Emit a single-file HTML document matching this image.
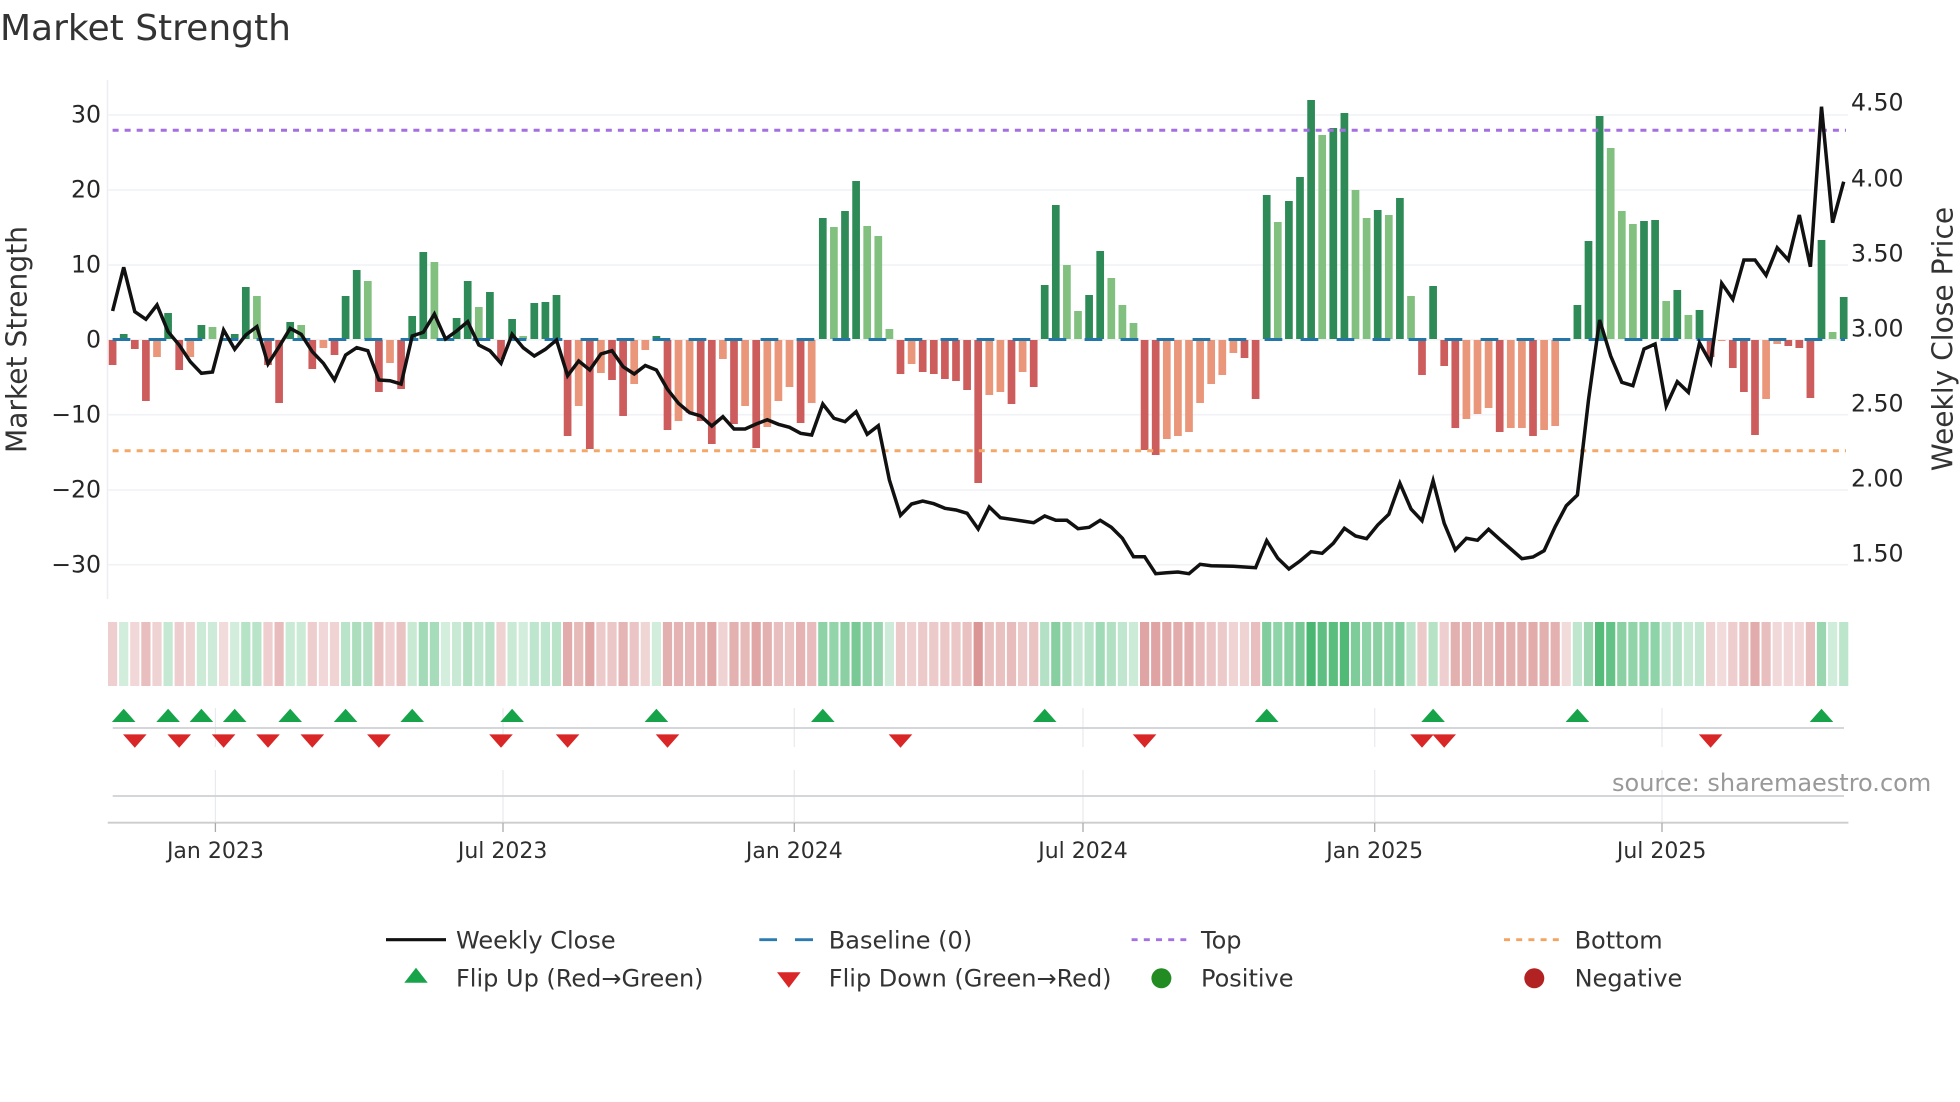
<!DOCTYPE html>
<html><head><meta charset="utf-8"><title>Market Strength</title>
<style>
html,body{margin:0;padding:0;background:#fff;width:1960px;height:1102px;overflow:hidden}
svg{display:block}
text{font-family:"DejaVu Sans","Liberation Sans",sans-serif}
.g{stroke:#29aa58}.r{stroke:#c04a4a}
</style></head><body>
<svg width="1960" height="1102" viewBox="0 0 1960 1102" xmlns="http://www.w3.org/2000/svg">
<rect width="1960" height="1102" fill="#fff"/>
<text x="0" y="40" font-size="36" fill="#333">Market Strength</text>

<!-- grid -->
<path d="M107.5 80V599" stroke="#eceef2" stroke-width="1.5" fill="none"/>
<path d="M108 115H1848M108 190H1848M108 265H1848M108 339.7H1848M108 414.7H1848M108 490H1848M108 564.7H1848" stroke="#f0f2f6" stroke-width="1.6" fill="none"/>

<!-- bars -->
<g fill="none" stroke-width="7.7">
<path stroke="#2e8b57" d="M123.7 339V334M168.1 339V313M201.4 339V325M234.7 339V334M245.8 339V287M290.2 339V322M345.6 339V296M356.7 339V270M412.2 339V316M423.3 339V252M456.6 339V318M467.7 339V281M489.9 339V292M512.1 339V319M534.3 339V303M545.4 339V302M556.5 339V295M656.4 339V336M822.8 339V218M845 339V211M856.1 339V181M1044.7 339V285M1055.8 339V205M1089.1 339V295M1100.2 339V251M1266.7 339V195M1288.9 339V201M1300 339V177M1311.1 339V100M1333.3 339V128M1344.4 339V113M1377.7 339V210M1399.9 339V198M1433.1 339V286M1577.4 339V305M1588.5 339V241M1599.6 339V116M1644 339V221M1655.1 339V220M1677.3 339V290M1699.5 339V310M1821.5 339V240M1843.7 339V297"/>
<path stroke="#81c07f" d="M212.5 339V327M256.9 339V296M301.2 339V325M367.8 339V281M434.4 339V262M445.5 339V338M478.8 339V307M523.2 339V336M833.9 339V227M867.2 339V226M878.3 339V236M889.4 339V329M1066.9 339V265M1078 339V311M1111.3 339V278M1122.4 339V305M1133.5 339V323M1277.8 339V222M1322.2 339V135M1355.5 339V190M1366.6 339V218M1388.8 339V215M1411 339V296M1610.7 339V148M1621.8 339V211M1632.9 339V224M1666.2 339V301M1688.4 339V315M1832.6 339V332"/>
<path stroke="#cd5c5c" d="M112.6 340V365M134.8 340V349M145.9 340V401M179.2 340V370M223.6 340V341M268 340V365M279.1 340V403M312.3 340V369M334.5 340V355M378.9 340V392M401.1 340V389M501 340V359M567.6 340V436M589.8 340V449M612 340V380M623.1 340V416M667.5 340V430M700.7 340V421M711.8 340V444M734 340V424M756.2 340V448M800.6 340V423M900.5 340V374M922.7 340V372M933.8 340V374M944.9 340V379M956 340V381M967.1 340V390M978.2 340V483M1011.5 340V404M1033.7 340V387M1144.6 340V450M1155.7 340V455M1244.5 340V358M1255.6 340V399M1422 340V375M1444.2 340V366M1455.3 340V428M1499.7 340V432M1533 340V436M1710.6 340V357M1732.8 340V368M1743.9 340V392M1755 340V435M1788.3 340V346M1799.3 340V348M1810.4 340V398"/>
<path stroke="#e9967a" d="M157 340V357M190.3 340V357M323.4 340V348M390 340V363M578.7 340V406M600.9 340V373M634.2 340V384M645.3 340V350M678.5 340V421M689.6 340V413M722.9 340V359M745.1 340V406M767.3 340V427M778.4 340V401M789.5 340V387M811.7 340V403M911.6 340V364M989.3 340V395M1000.4 340V392M1022.6 340V372M1166.8 340V439M1177.9 340V436M1189 340V432M1200.1 340V403M1211.2 340V384M1222.3 340V375M1233.4 340V353M1466.4 340V419M1477.5 340V414M1488.6 340V408M1510.8 340V428M1521.9 340V428M1544.1 340V430M1555.2 340V426M1566.3 340V341M1721.7 340V341M1766.1 340V399M1777.2 340V344"/>
</g>

<!-- baseline and thresholds -->
<path d="M112.6 339.5H1845" stroke="#2276a8" stroke-width="3" stroke-dasharray="17.7 18.3" fill="none"/>
<path d="M112.6 130.3H1846" stroke="#a46fe0" stroke-width="3" stroke-dasharray="6 6.03" fill="none"/>
<path d="M112.6 450.7H1846" stroke="#f4a868" stroke-width="3" stroke-dasharray="6 6.03" fill="none"/>

<!-- price -->
<polyline fill="none" stroke="#111" stroke-width="3.5" stroke-linejoin="miter" points="112.6,311 123.7,267.3 134.8,311.7 145.9,319.3 157,305 168.1,331.7 179.2,345 190.3,361.7 201.4,373.3 212.5,372 223.6,330 234.7,349.3 245.8,335 256.9,326.7 268,364 279.1,346.7 290.2,328.3 301.2,334.3 312.3,351.7 323.4,363.3 334.5,380 345.6,355 356.7,347.7 367.8,350.7 378.9,380 390,380.7 401.1,384 412.2,336 423.3,332.3 434.4,314 445.5,339 456.6,331 467.7,321.7 478.8,345 489.9,350.7 501,363.3 512.1,334.3 523.2,347.7 534.3,356 545.4,349.3 556.5,340 567.6,375.7 578.7,361 589.8,370 600.9,354 612,350.7 623.1,366.7 634.2,374 645.3,365.5 656.4,370 667.5,389.3 678.5,403.3 689.6,412.7 700.7,416 711.8,426 722.9,416.7 734,429 745.1,429 756.2,424 767.3,419.7 778.4,424.3 789.5,427.3 800.6,433.3 811.7,435 822.8,404 833.9,418.3 845,421.7 856.1,411.7 867.2,434.3 878.3,425.7 889.4,480 900.5,515.3 911.6,504 922.7,501 933.8,503.7 944.9,508.3 956,510 967.1,513.3 978.2,529 989.3,507 1000.4,517.7 1011.5,519.3 1022.6,521 1033.7,522.7 1044.7,516 1055.8,520.3 1066.9,520.3 1078,528.7 1089.1,527.3 1100.2,520.3 1111.3,527.3 1122.4,538.3 1133.5,556.7 1144.6,556.7 1155.7,573.7 1166.8,572.7 1177.9,572 1189,573.7 1200.1,564.3 1211.2,565.7 1222.3,566 1233.4,566.3 1244.5,567 1255.6,567.7 1266.7,540.7 1277.8,558.3 1288.9,569 1300,561 1311.1,551.7 1322.2,553.3 1333.3,543.3 1344.4,528.3 1355.5,536 1366.6,538.7 1377.7,525 1388.8,514.3 1399.9,483.3 1411,509 1422,520.7 1433.1,480.7 1444.2,523.3 1455.3,550 1466.4,538.3 1477.5,540.3 1488.6,529.3 1499.7,539.3 1510.8,549 1521.9,558.7 1533,557 1544.1,550.7 1555.2,526.7 1566.3,505.7 1577.4,495 1588.5,400 1599.6,320 1610.7,356 1621.8,382.3 1632.9,385.7 1644,349 1655.1,344 1666.2,406 1677.3,381.7 1688.4,392.3 1699.5,343 1710.6,362.7 1721.7,283.3 1732.8,299.3 1743.9,260 1755,260 1766.1,275.3 1777.2,247.7 1788.3,260 1799.3,215 1810.4,266.7 1821.5,106.7 1832.6,222.7 1843.7,181.7"/>

<!-- left axis labels -->
<g font-size="23.6" fill="#262626" text-anchor="end">
<text x="101" y="122.7">30</text>
<text x="101" y="197.7">20</text>
<text x="101" y="272.5">10</text>
<text x="101" y="347.3">0</text>
<text x="101" y="422.7">−10</text>
<text x="101" y="497.7">−20</text>
<text x="101" y="572.7">−30</text>
</g>
<g font-size="23.6" fill="#262626">
<text x="1851" y="110.7">4.50</text>
<text x="1851" y="186.7">4.00</text>
<text x="1851" y="261.7">3.50</text>
<text x="1851" y="336.7">3.00</text>
<text x="1851" y="411.7">2.50</text>
<text x="1851" y="486.7">2.00</text>
<text x="1851" y="561.7">1.50</text>
</g>
<text transform="translate(26.4 339.5) rotate(-90)" text-anchor="middle" font-size="28.1" fill="#333">Market Strength</text>
<text transform="translate(1952.5 339) rotate(-90)" text-anchor="middle" font-size="28.1" fill="#333">Weekly Close Price</text>

<!-- heat strip -->
<g fill="none" stroke-width="9.2">
<path class="r" opacity=".27" d="M112.6 622v64"/><path class="g" opacity=".21" d="M123.7 622v64"/><path class="r" opacity=".22" d="M134.8 622v64"/><path class="r" opacity=".36" d="M145.9 622v64"/><path class="r" opacity=".25" d="M157 622v64"/><path class="g" opacity=".27" d="M168.1 622v64"/><path class="r" opacity=".28" d="M179.2 622v64"/><path class="r" opacity=".25" d="M190.3 622v64"/><path class="g" opacity=".24" d="M201.4 622v64"/><path class="g" opacity=".23" d="M212.5 622v64"/>
<path class="r" opacity=".2" d="M223.6 622v64"/><path class="g" opacity=".21" d="M234.7 622v64"/><path class="g" opacity=".34" d="M245.8 622v64"/><path class="g" opacity=".32" d="M256.9 622v64"/><path class="r" opacity=".27" d="M268 622v64"/><path class="r" opacity=".37" d="M279.1 622v64"/><path class="g" opacity=".25" d="M290.2 622v64"/><path class="g" opacity=".24" d="M301.2 622v64"/><path class="r" opacity=".28" d="M312.3 622v64"/><path class="r" opacity=".22" d="M323.4 622v64"/>
<path class="r" opacity=".24" d="M334.5 622v64"/><path class="g" opacity=".32" d="M345.6 622v64"/><path class="g" opacity=".39" d="M356.7 622v64"/><path class="g" opacity=".36" d="M367.8 622v64"/><path class="r" opacity=".34" d="M378.9 622v64"/><path class="r" opacity=".26" d="M390 622v64"/><path class="r" opacity=".33" d="M401.1 622v64"/><path class="g" opacity=".26" d="M412.2 622v64"/><path class="g" opacity=".43" d="M423.3 622v64"/><path class="g" opacity=".41" d="M434.4 622v64"/>
<path class="g" opacity=".2" d="M445.5 622v64"/><path class="g" opacity=".26" d="M456.6 622v64"/><path class="g" opacity=".36" d="M467.7 622v64"/><path class="g" opacity=".29" d="M478.8 622v64"/><path class="g" opacity=".33" d="M489.9 622v64"/><path class="r" opacity=".25" d="M501 622v64"/><path class="g" opacity=".25" d="M512.1 622v64"/><path class="g" opacity=".21" d="M523.2 622v64"/><path class="g" opacity=".3" d="M534.3 622v64"/><path class="g" opacity=".3" d="M545.4 622v64"/>
<path class="g" opacity=".32" d="M556.5 622v64"/><path class="r" opacity=".46" d="M567.6 622v64"/><path class="r" opacity=".38" d="M578.7 622v64"/><path class="r" opacity=".49" d="M589.8 622v64"/><path class="r" opacity=".29" d="M600.9 622v64"/><path class="r" opacity=".31" d="M612 622v64"/><path class="r" opacity=".41" d="M623.1 622v64"/><path class="r" opacity=".32" d="M634.2 622v64"/><path class="r" opacity=".23" d="M645.3 622v64"/><path class="g" opacity=".21" d="M656.4 622v64"/>
<path class="r" opacity=".44" d="M667.5 622v64"/><path class="r" opacity=".42" d="M678.5 622v64"/><path class="r" opacity=".4" d="M689.6 622v64"/><path class="r" opacity=".42" d="M700.7 622v64"/><path class="r" opacity=".48" d="M711.8 622v64"/><path class="r" opacity=".25" d="M722.9 622v64"/><path class="r" opacity=".43" d="M734 622v64"/><path class="r" opacity=".38" d="M745.1 622v64"/><path class="r" opacity=".49" d="M756.2 622v64"/><path class="r" opacity=".43" d="M767.3 622v64"/>
<path class="r" opacity=".36" d="M778.4 622v64"/><path class="r" opacity=".33" d="M789.5 622v64"/><path class="r" opacity=".42" d="M800.6 622v64"/><path class="r" opacity=".37" d="M811.7 622v64"/><path class="g" opacity=".53" d="M822.8 622v64"/><path class="g" opacity=".5" d="M833.9 622v64"/><path class="g" opacity=".55" d="M845 622v64"/><path class="g" opacity=".63" d="M856.1 622v64"/><path class="g" opacity=".51" d="M867.2 622v64"/><path class="g" opacity=".48" d="M878.3 622v64"/>
<path class="g" opacity=".23" d="M889.4 622v64"/><path class="r" opacity=".29" d="M900.5 622v64"/><path class="r" opacity=".26" d="M911.6 622v64"/><path class="r" opacity=".29" d="M922.7 622v64"/><path class="r" opacity=".29" d="M933.8 622v64"/><path class="r" opacity=".31" d="M944.9 622v64"/><path class="r" opacity=".31" d="M956 622v64"/><path class="r" opacity=".34" d="M967.1 622v64"/><path class="r" opacity=".59" d="M978.2 622v64"/><path class="r" opacity=".35" d="M989.3 622v64"/>
<path class="r" opacity=".34" d="M1000.4 622v64"/><path class="r" opacity=".37" d="M1011.5 622v64"/><path class="r" opacity=".29" d="M1022.6 622v64"/><path class="r" opacity=".33" d="M1033.7 622v64"/><path class="g" opacity=".35" d="M1044.7 622v64"/><path class="g" opacity=".56" d="M1055.8 622v64"/><path class="g" opacity=".4" d="M1066.9 622v64"/><path class="g" opacity=".28" d="M1078 622v64"/><path class="g" opacity=".32" d="M1089.1 622v64"/><path class="g" opacity=".44" d="M1100.2 622v64"/>
<path class="g" opacity=".36" d="M1111.3 622v64"/><path class="g" opacity=".29" d="M1122.4 622v64"/><path class="g" opacity=".24" d="M1133.5 622v64"/><path class="r" opacity=".5" d="M1144.6 622v64"/><path class="r" opacity=".51" d="M1155.7 622v64"/><path class="r" opacity=".47" d="M1166.8 622v64"/><path class="r" opacity=".46" d="M1177.9 622v64"/><path class="r" opacity=".45" d="M1189 622v64"/><path class="r" opacity=".37" d="M1200.1 622v64"/><path class="r" opacity=".32" d="M1211.2 622v64"/>
<path class="r" opacity=".29" d="M1222.3 622v64"/><path class="r" opacity=".24" d="M1233.4 622v64"/><path class="r" opacity=".25" d="M1244.5 622v64"/><path class="r" opacity=".36" d="M1255.6 622v64"/><path class="g" opacity=".59" d="M1266.7 622v64"/><path class="g" opacity=".52" d="M1277.8 622v64"/><path class="g" opacity=".57" d="M1288.9 622v64"/><path class="g" opacity=".64" d="M1300 622v64"/><path class="g" opacity=".85" d="M1311.1 622v64"/><path class="g" opacity=".75" d="M1322.2 622v64"/>
<path class="g" opacity=".77" d="M1333.3 622v64"/><path class="g" opacity=".81" d="M1344.4 622v64"/><path class="g" opacity=".6" d="M1355.5 622v64"/><path class="g" opacity=".53" d="M1366.6 622v64"/><path class="g" opacity=".55" d="M1377.7 622v64"/><path class="g" opacity=".53" d="M1388.8 622v64"/><path class="g" opacity=".58" d="M1399.9 622v64"/><path class="g" opacity=".32" d="M1411 622v64"/><path class="r" opacity=".29" d="M1422 622v64"/><path class="g" opacity=".34" d="M1433.1 622v64"/>
<path class="r" opacity=".27" d="M1444.2 622v64"/><path class="r" opacity=".44" d="M1455.3 622v64"/><path class="r" opacity=".41" d="M1466.4 622v64"/><path class="r" opacity=".4" d="M1477.5 622v64"/><path class="r" opacity=".38" d="M1488.6 622v64"/><path class="r" opacity=".45" d="M1499.7 622v64"/><path class="r" opacity=".44" d="M1510.8 622v64"/><path class="r" opacity=".44" d="M1521.9 622v64"/><path class="r" opacity=".46" d="M1533 622v64"/><path class="r" opacity=".44" d="M1544.1 622v64"/>
<path class="r" opacity=".43" d="M1555.2 622v64"/><path class="r" opacity=".2" d="M1566.3 622v64"/><path class="g" opacity=".29" d="M1577.4 622v64"/><path class="g" opacity=".46" d="M1588.5 622v64"/><path class="g" opacity=".8" d="M1599.6 622v64"/><path class="g" opacity=".72" d="M1610.7 622v64"/><path class="g" opacity=".55" d="M1621.8 622v64"/><path class="g" opacity=".51" d="M1632.9 622v64"/><path class="g" opacity=".52" d="M1644 622v64"/><path class="g" opacity=".52" d="M1655.1 622v64"/>
<path class="g" opacity=".3" d="M1666.2 622v64"/><path class="g" opacity=".33" d="M1677.3 622v64"/><path class="g" opacity=".26" d="M1688.4 622v64"/><path class="g" opacity=".28" d="M1699.5 622v64"/><path class="r" opacity=".25" d="M1710.6 622v64"/><path class="r" opacity=".2" d="M1721.7 622v64"/><path class="r" opacity=".28" d="M1732.8 622v64"/><path class="r" opacity=".34" d="M1743.9 622v64"/><path class="r" opacity=".46" d="M1755 622v64"/><path class="r" opacity=".36" d="M1766.1 622v64"/>
<path class="r" opacity=".21" d="M1777.2 622v64"/><path class="r" opacity=".22" d="M1788.3 622v64"/><path class="r" opacity=".22" d="M1799.3 622v64"/><path class="r" opacity=".36" d="M1810.4 622v64"/><path class="g" opacity=".47" d="M1821.5 622v64"/><path class="g" opacity=".22" d="M1832.6 622v64"/><path class="g" opacity=".31" d="M1843.7 622v64"/>
</g>

<!-- lower panels: faint vertical grid -->
<path d="M215.4 708V747M503 708V747M794.3 708V747M1083 708V747M1374.7 708V747M1662 708V747M215.4 770V823M503 770V823M794.3 770V823M1083 770V823M1374.7 770V823M1662 770V823" stroke="#e8eaee" stroke-width="1.2" fill="none"/>
<path d="M112.7 728H1844M112.7 796H1844" stroke="#cfd1d4" stroke-width="1.8" fill="none"/>
<path d="M107.7 822.7H1848.4" stroke="#cccccc" stroke-width="1.8" fill="none"/>
<path d="M215.4 823V832M503 823V832M794.3 823V832M1083 823V832M1374.7 823V832M1662 823V832" stroke="#aaa" stroke-width="1.3" fill="none"/>

<!-- flip markers -->
<path fill="#16a34a" d="M123.7 708.7l11.8 13.3h-23.6zM168.1 708.7l11.8 13.3h-23.6zM201.4 708.7l11.8 13.3h-23.6zM234.7 708.7l11.8 13.3h-23.6zM290.2 708.7l11.8 13.3h-23.6zM345.6 708.7l11.8 13.3h-23.6zM412.2 708.7l11.8 13.3h-23.6zM512.1 708.7l11.8 13.3h-23.6zM656.4 708.7l11.8 13.3h-23.6zM822.8 708.7l11.8 13.3h-23.6zM1044.7 708.7l11.8 13.3h-23.6zM1266.7 708.7l11.8 13.3h-23.6zM1433.1 708.7l11.8 13.3h-23.6zM1577.4 708.7l11.8 13.3h-23.6zM1821.5 708.7l11.8 13.3h-23.6z"/>
<path fill="#d92626" d="M134.8 747.7l11.8 -13.3h-23.6zM179.2 747.7l11.8 -13.3h-23.6zM223.6 747.7l11.8 -13.3h-23.6zM268 747.7l11.8 -13.3h-23.6zM312.3 747.7l11.8 -13.3h-23.6zM378.9 747.7l11.8 -13.3h-23.6zM501 747.7l11.8 -13.3h-23.6zM567.6 747.7l11.8 -13.3h-23.6zM667.5 747.7l11.8 -13.3h-23.6zM900.5 747.7l11.8 -13.3h-23.6zM1144.6 747.7l11.8 -13.3h-23.6zM1422 747.7l11.8 -13.3h-23.6zM1444.2 747.7l11.8 -13.3h-23.6zM1710.6 747.7l11.8 -13.3h-23.6z"/>

<!-- x labels -->
<g font-size="22" fill="#2e2e2e" text-anchor="middle">
<text x="215.4" y="858">Jan 2023</text>
<text x="502.6" y="858">Jul 2023</text>
<text x="794.3" y="858">Jan 2024</text>
<text x="1083" y="858">Jul 2024</text>
<text x="1374.7" y="858">Jan 2025</text>
<text x="1661.6" y="858">Jul 2025</text>
</g>

<text x="1612" y="791" font-size="24" fill="#999">source: sharemaestro.com</text>

<!-- legend -->
<path d="M386 939.7H446" stroke="#111" stroke-width="3.2" fill="none"/>
<path d="M759.3 939.7H777M795 939.7H813" stroke="#2b7bb0" stroke-width="2.8" fill="none"/>
<path d="M1131.6 939.7H1186.3" stroke="#a470e2" stroke-width="2.8" stroke-dasharray="6 6.2" fill="none"/>
<path d="M1504 939.7H1558.8" stroke="#f4a460" stroke-width="2.8" stroke-dasharray="6 6.2" fill="none"/>
<path fill="#16a34a" d="M416 967.7l11.7 15h-23.4z"/>
<path fill="#d92626" d="M788.8 987.7l11.8 -15.4h-23.6z"/>
<circle cx="1161.4" cy="978.3" r="10" fill="#228b22"/>
<circle cx="1534.3" cy="978.3" r="10" fill="#b22222"/>
<g font-size="24" fill="#333">
<text x="456" y="948.3">Weekly Close</text>
<text x="828.8" y="948.3">Baseline (0)</text>
<text x="1201" y="948.3">Top</text>
<text x="1574.6" y="948.3">Bottom</text>
<text x="456" y="986.6">Flip Up (Red→Green)</text>
<text x="828.8" y="986.6">Flip Down (Green→Red)</text>
<text x="1201" y="986.6">Positive</text>
<text x="1574.6" y="986.6">Negative</text>
</g>
</svg>
</body></html>
